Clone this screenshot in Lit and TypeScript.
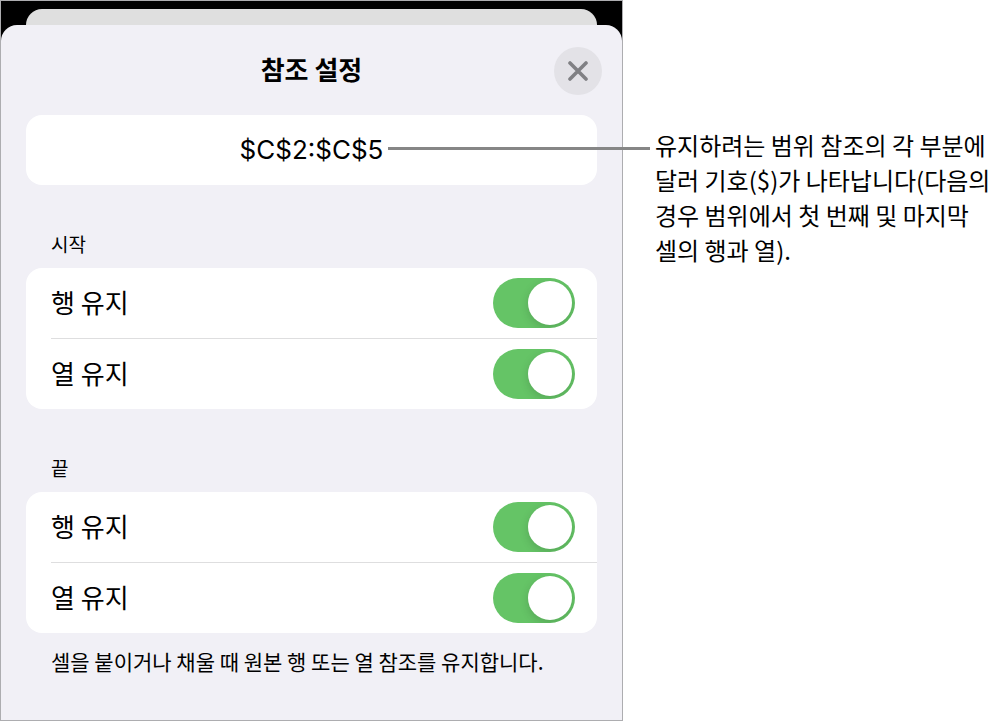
import { LitElement, html, css } from "lit";
import { customElement, property, state } from "lit/decorators.js";

@customElement("toggle-row")
class ToggleRow extends LitElement {
  @property() label = "";
  @property({ type: Boolean }) checked = false;

  static styles = css`
    :host {
      display: block;
    }
    .row {
      display: flex;
      align-items: center;
      justify-content: space-between;
      height: 70px;
      padding-right: 22px;
      font-size: 26px;
      line-height: 36px;
    }
    .text {
      padding-bottom: 3px;
    }
    .switch {
      appearance: none;
      display: flex;
      align-items: center;
      flex: none;
      box-sizing: border-box;
      width: 82px;
      height: 50px;
      margin: 0;
      padding: 3px;
      border-radius: 25px;
      background: #e2e2e5;
      overflow: hidden;
      cursor: pointer;
    }
    .switch::before {
      content: "";
      width: 44px;
      height: 44px;
      border-radius: 50%;
      background: #fff;
      box-shadow: 0 3px 10px rgba(0, 0, 0, 0.15);
    }
    .switch:checked {
      justify-content: flex-end;
      background: #65c466;
    }
  `;

  render() {
    return html`
      <label class="row">
        <span class="text">${this.label}</span>
        <input
          class="switch"
          type="checkbox"
          role="switch"
          .checked=${this.checked}
          @change=${(e: Event) => (this.checked = (e.target as HTMLInputElement).checked)}
        />
      </label>
    `;
  }
}

@customElement("app-root")
class AppRoot extends LitElement {
  @state() private sections = [
    { title: "시작", rows: ["행 유지", "열 유지"] },
    { title: "끝", rows: ["행 유지", "열 유지"] },
  ];

  static styles = css`
    :host {
      display: block;
      background: #fff;
      color: #000;
      font-family: "Noto Sans CJK KR", sans-serif;
      word-break: keep-all;
    }
    .page {
      display: grid;
      grid-template-columns: 89fr 55fr;
      min-height: 100vh;
    }
    .screen {
      display: flex;
      flex-direction: column;
      border: 1px solid #adadb0;
      background: #000;
      padding-top: 8px;
    }
    .behind {
      height: 16px;
      margin: 0 25px;
      border-radius: 16px 16px 0 0;
      background: #dfdfdf;
    }
    .sheet {
      flex: 1;
      padding: 22px 25px 40px;
      border-radius: 16px 16px 0 0;
      background: #f1f0f6;
    }
    .header {
      display: grid;
      grid-template-columns: 48px 1fr 48px;
      align-items: center;
      margin: 0 -5px 20px;
    }
    .title {
      grid-column: 2;
      margin: 0;
      padding-bottom: 4px;
      text-align: center;
      font-size: 26px;
      line-height: 36px;
      font-weight: 700;
    }
    .close {
      display: grid;
      place-items: center;
      width: 48px;
      height: 48px;
      padding: 0;
      border: 0;
      border-radius: 50%;
      background: #e3e2e7;
      cursor: pointer;
    }
    .card {
      border-radius: 16px;
      background: #fff;
    }
    .reference {
      position: relative;
      display: grid;
      place-items: center;
      height: 70px;
      font-family: Inter, sans-serif;
      font-size: 26px;
      line-height: 36px;
    }
    .leader {
      position: absolute;
      top: 32px;
      left: calc(50% + 76px);
      right: -53px;
      height: 3px;
      background: #868686;
    }
    .label {
      margin: 0;
      padding: 44px 25px 9px;
      font-size: 19px;
      line-height: 30px;
      font-weight: 400;
    }
    .first,
    .divided {
      margin-left: 25px;
    }
    .divided {
      border-top: 1px solid #dededf;
    }
    .note {
      margin: 0;
      padding: 13px 25px 0;
      font-size: 21px;
      line-height: 30px;
    }
    .callout {
      margin: 0;
      padding: 127px 12px 0 32px;
      font-size: 24px;
      line-height: 35px;
    }
  `;

  render() {
    return html`
      <main class="page">
        <div class="screen">
          <div class="behind"></div>
          <section class="sheet">
            <header class="header">
              <h1 class="title">참조 설정</h1>
              <button class="close" aria-label="닫기">
                <svg width="20" height="20" viewBox="0 0 20 20" fill="none" stroke="#808084" stroke-width="3.6" stroke-linecap="round">
                  <path d="M2 2 18 18M18 2 2 18" />
                </svg>
              </button>
            </header>
            <div class="card reference">
              <span>$C$2:$C$5</span>
              <span class="leader"></span>
            </div>
            ${this.sections.map(
              (s) => html`
                <h2 class="label">${s.title}</h2>
                <div class="card">
                  ${s.rows.map(
                    (r, i) => html`
                      <div class=${i ? "divided" : "first"}>
                        <toggle-row label=${r} checked></toggle-row>
                      </div>
                    `
                  )}
                </div>
              `
            )}
            <p class="note">셀을 붙이거나 채울 때 원본 행 또는 열 참조를 유지합니다.</p>
          </section>
        </div>
        <p class="callout">유지하려는 범위 참조의 각 부분에 달러 기호($)가 나타납니다(다음의 경우 범위에서 첫 번째 및 마지막 셀의 행과 열).</p>
      </main>
    `;
  }
}
